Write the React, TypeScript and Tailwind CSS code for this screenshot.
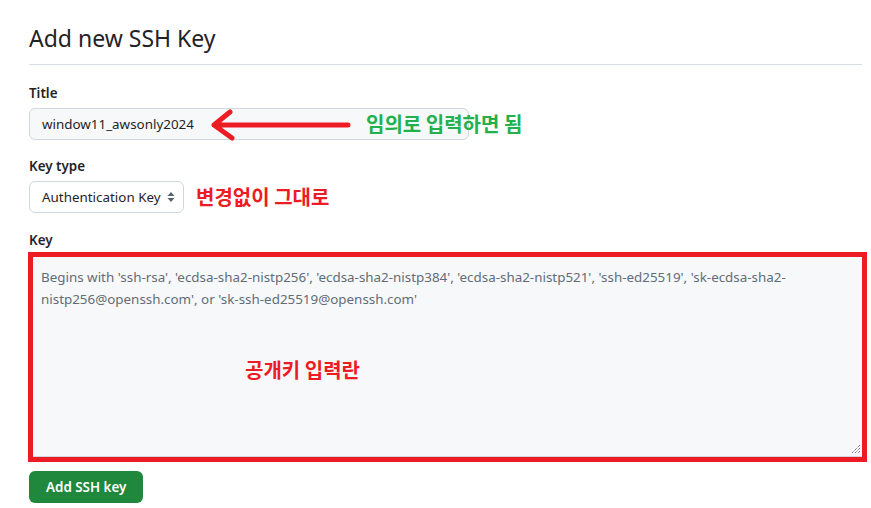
import React from "react";

const font = { fontFamily: '"Noto Sans", "Noto Sans CJK KR", sans-serif' };
const kr = { fontFamily: '"Noto Sans CJK KR", sans-serif' };

export default function App() {
  return (
    <div className="relative w-[871px] h-[508px] bg-white overflow-hidden text-[#1f2328]" style={font}>
      <div className="pl-[29px] pr-[9px] pt-[20px]">
        <div className="border-b border-[#d8dee4] pb-[8px]">
          <h2 className="text-[23px] leading-[36px] font-normal">Add new SSH Key</h2>
        </div>

        <div className="mt-[18px]">
          <div className="text-[13.4px] leading-[21px] font-semibold">Title</div>
          <div className="mt-[4px] w-[440px] h-[32px] rounded-[6px] border border-[#d0d7de] bg-[#f6f8fa] flex items-center pl-[12px] text-[13.4px]">
            window11_awsonly2024
          </div>
        </div>

        <div className="mt-[16px]">
          <div className="text-[13.4px] leading-[21px] font-semibold">Key type</div>
          <div className="mt-[4px] flex items-center gap-[12px]">
            <div className="w-[155px] h-[32px] rounded-[6px] border border-[#d0d7de] bg-white flex items-center pl-[12px] pr-[8px] text-[13.4px] justify-between whitespace-nowrap">
              <span>Authentication Key</span>
              <svg width="8" height="12" viewBox="0 0 8 12">
                <path d="M4 1 L7.5 5 H0.5 Z" fill="#59636e" />
                <path d="M4 11 L7.5 7 H0.5 Z" fill="#59636e" />
              </svg>
            </div>
            <span className="text-[20px] font-bold text-[#ed1c24] leading-none" style={kr}>변경없이 그대로</span>
          </div>
        </div>

        <div className="mt-[17px]">
          <div className="text-[13.4px] leading-[21px] font-semibold">Key</div>
          <div className="relative mt-[1px] -ml-[1px] w-[839px] h-[210px] border-[5px] border-[#ed1c24] bg-[#f6f8fa]">
            <div className="h-full border-b border-[#d0d7de] pl-[8px] pt-[9px] text-[13.4px] leading-[22px] text-[#636c76]">
              Begins with 'ssh-rsa', 'ecdsa-sha2-nistp256', 'ecdsa-sha2-nistp384', 'ecdsa-sha2-nistp521', 'ssh-ed25519', 'sk-ecdsa-sha2-
              <br />
              nistp256@openssh.com', or 'sk-ssh-ed25519@openssh.com'
            </div>
            <svg width="10" height="10" viewBox="0 0 10 10" className="absolute right-[1px] bottom-[3px]">
              <path d="M9 1 L1 9 M9 4 L4 9 M9 7 L7 9" stroke="#555" strokeWidth="1" strokeDasharray="1 1" />
            </svg>
            <span className="absolute left-[212px] top-[103px] text-[20px] font-bold text-[#ed1c24] leading-none" style={kr}>공개키 입력란</span>
          </div>
        </div>

        <button className="mt-[9px] h-[32px] px-[17px] rounded-[6px] bg-[#1f883d] text-white text-[13.4px] font-semibold">
          Add SSH key
        </button>
      </div>

      <svg className="absolute left-[208px] top-[108px]" width="145" height="34" viewBox="0 0 145 34">
        <path d="M140 17 H6 M22 4 L6 17 L24 30" stroke="#ed1c24" strokeWidth="5" strokeLinecap="round" strokeLinejoin="round" fill="none" />
      </svg>
      <span className="absolute left-[366px] top-[114px] text-[20px] font-bold text-[#22b14c] leading-none" style={kr}>임의로 입력하면 됨</span>
    </div>
  );
}
